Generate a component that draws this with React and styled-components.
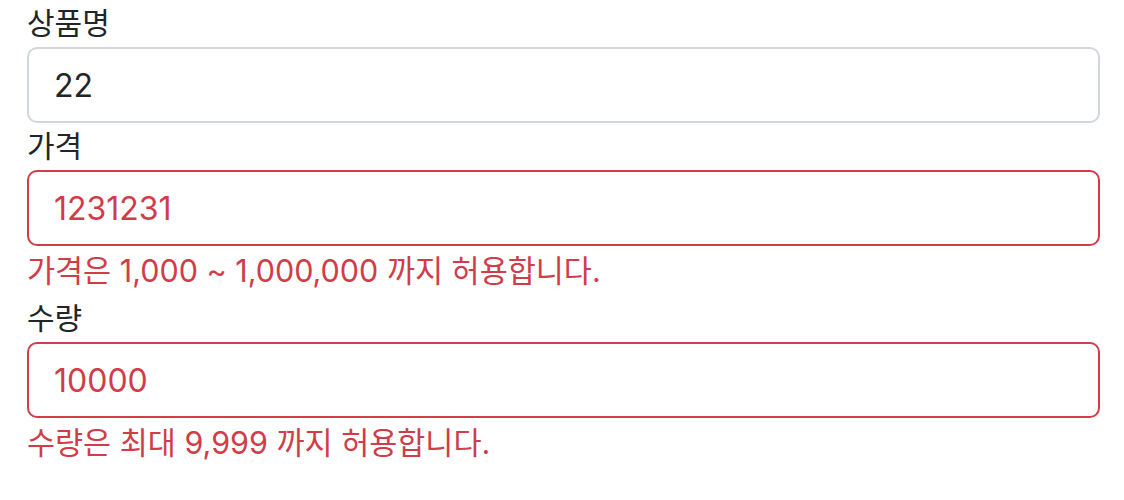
import React from "react";
import styled, { createGlobalStyle } from "styled-components";

const Global = createGlobalStyle`
  html, body { margin: 0; padding: 0; background: #fff; }
  body {
    font-family: Inter, "Noto Sans CJK KR", "Noto Sans", sans-serif;
    color: #212529;
  }
`;

const Form = styled.form`
  display: flex;
  flex-direction: column;
  width: 1073px;
  margin-left: 27px;
`;

const Field = styled.div`
  display: flex;
  flex-direction: column;
`;

const Label = styled.label`
  display: block;
  font-size: 30px;
  line-height: 47px;
  height: 47px;
  color: #212529;
`;

const Input = styled.input`
  box-sizing: border-box;
  width: 100%;
  height: 76px;
  padding: 0 25px;
  font-family: inherit;
  font-size: 32px;
  color: ${(p) => (p.$invalid ? "#d03c48" : "#212529")};
  background: #fff;
  border: 2px solid ${(p) => (p.$invalid ? "#d03c48" : "#d3d6da")};
  border-radius: 10px;
  outline: none;
`;

const Feedback = styled.div`
  font-size: 30.5px;
  line-height: 49px;
  height: 49px;
  color: #d03c48;
`;

export default function App() {
  return (
    <>
      <Global />
      <Form onSubmit={(e) => e.preventDefault()}>
        <Field>
          <Label>상품명</Label>
          <Input defaultValue="22" />
        </Field>
        <Field>
          <Label>가격</Label>
          <Input $invalid defaultValue="1231231" />
          <Feedback>가격은 1,000 ~ 1,000,000 까지 허용합니다.</Feedback>
        </Field>
        <Field>
          <Label>수량</Label>
          <Input $invalid defaultValue="10000" />
          <Feedback>수량은 최대 9,999 까지 허용합니다.</Feedback>
        </Field>
      </Form>
    </>
  );
}
